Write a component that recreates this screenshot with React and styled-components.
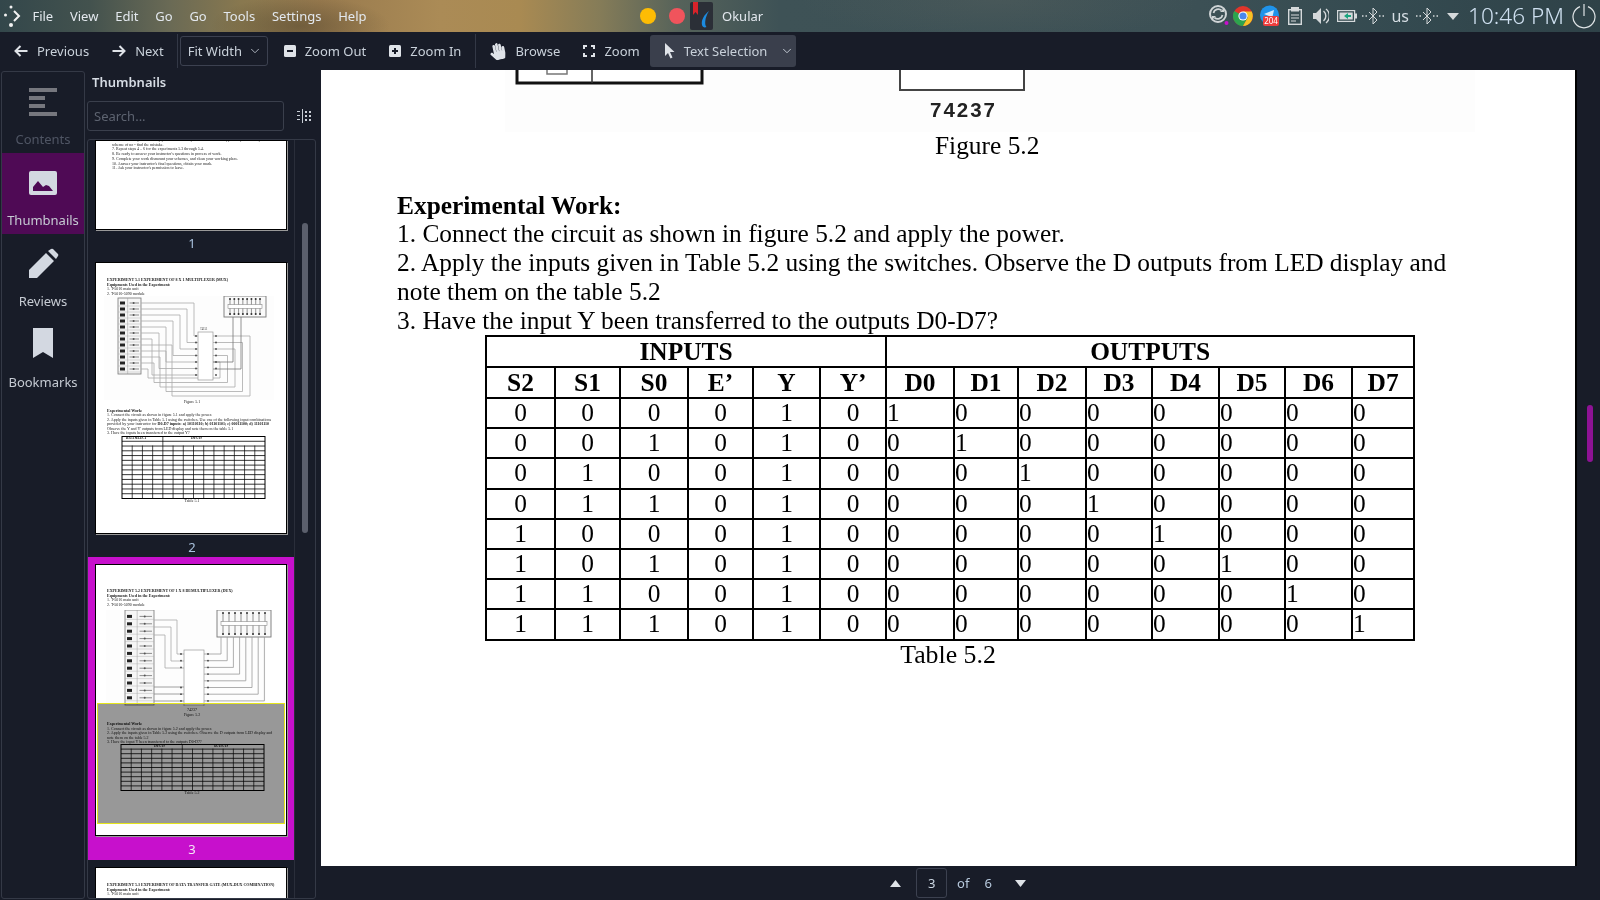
import React from 'react';
import styled, { createGlobalStyle } from 'styled-components';
import { ChevronDown } from 'lucide-react';
import { FaHandPaper } from 'react-icons/fa';

const GlobalStyle = createGlobalStyle`
  html, body {
    margin: 0;
    padding: 0;
    background: #181c28;
  }
  * { box-sizing: border-box; }
`;

const Screen = styled.div`
  width: 1600px;
  height: 900px;
  display: flex;
  flex-direction: column;
  overflow: hidden;
  background: #181c28;
  font-family: "Noto Sans", sans-serif;
  font-size: 13px;
  color: #d3dae3;
`;

/* top desktop panel */
const Panel = styled.div`
  height: 32px;
  flex: none;
  display: flex;
  align-items: center;
  padding-left: 3px;
  background:
    radial-gradient(ellipse 90px 30px at 300px 26px, rgba(70, 60, 40, 0.45), transparent),
    radial-gradient(ellipse 200px 40px at 1000px 0, rgba(110, 110, 100, 0.22), transparent),
    linear-gradient(90deg, #33474b 0, #43524e 90px, #6a6a55 170px, #88784f 240px, #987a4e 320px, #ab8b56 440px, #a98a52 520px, #857c58 600px, #55625a 680px, #3e5256 780px, #3c5055 1200px, #344a50 1400px, #2f4248 1600px);
`;

const Logo = styled.svg`
  width: 18px;
  height: 26px;
  margin-right: 2px;
`;

const MenuBar = styled.div`
  display: flex;
  margin-left: 1px;
  width: 616px;
`;

const MenuItem = styled.span`
  padding: 0 8.4px;
  color: #e3e8ee;
`;

const TaskDot = styled.span`
  width: 16px;
  height: 16px;
  border-radius: 50%;
  background: ${p => p.$color};
  margin-right: ${p => p.$space}px;
`;

const TaskIcon = styled.svg`
  width: 23px;
  height: 28px;
`;

const TaskTitle = styled.span`
  margin-left: 9px;
  color: #e3e8ee;
`;

const Tray = styled.div`
  margin-left: auto;
  display: flex;
  align-items: center;
  padding-right: 4px;
`;

const TrayIcon = styled.svg`
  margin-left: ${p => p.$gap || 0}px;
  flex: none;
  display: block;
`;

const TrayText = styled.span`
  margin-left: ${p => p.$gap || 0}px;
  color: #d5dde3;
  font-size: 16px;
`;

const Clock = styled.span`
  margin-left: 9px;
  font-size: 22.6px;
  font-weight: 300;
  line-height: 32px;
  color: #cfe0f0;
  white-space: nowrap;
`;

/* okular toolbar */
const Toolbar = styled.div`
  height: 38px;
  flex: none;
  display: flex;
  align-items: center;
  gap: 1px;
  padding-left: 3px;
  background: #181c28;
`;

const ToolButton = styled.div`
  height: 32px;
  display: flex;
  align-items: center;
  gap: 9px;
  padding: 0 11px;
  color: #c9d1da;
  white-space: nowrap;
  border-radius: 3px;
  svg { flex: none; }
`;

const ActiveButton = styled(ToolButton)`
  margin-left: -2px;
  padding-left: 13px;
  background: #3a3f4c;
`;

const Separator = styled.div`
  width: 1px;
  height: 34px;
  margin: 0 ${p => p.$space}px;
  background: #333846;
`;

const Combo = styled.div`
  width: 88px;
  height: 30px;
  margin-right: 4px;
  padding: 0 5px 0 7px;
  display: flex;
  align-items: center;
  justify-content: space-between;
  border: 1px solid #3c4150;
  border-radius: 3px;
  color: #c9d1da;
`;

const Body = styled.div`
  flex: 1;
  display: flex;
  min-height: 0;
`;

/* left tabs */
const Tabs = styled.div`
  width: 84px;
  margin: 1px 0 1px 1px;
  flex: none;
  border: 1px solid #343946;
  border-radius: 3px;
`;

const Tab = styled.div`
  height: ${p => p.$h || 80}px;
  display: flex;
  flex-direction: column;
  align-items: center;
  padding-top: ${p => p.$top || 14}px;
  background: ${p => (p.$active ? '#4f0a55' : 'transparent')};
  color: ${p => (p.$disabled ? '#4f5564' : '#c6cbd3')};
`;

const TabIcon = styled.svg`
  width: 32px;
  height: 32px;
  display: block;
`;

const TabLabel = styled.span`
  font-size: 13px;
  line-height: 20px;
  margin-top: ${p => p.$gap || 11}px;
`;

/* thumbnails panel */
const SidePanel = styled.div`
  width: 231px;
  flex: none;
  display: flex;
  flex-direction: column;
  padding: 0 0 1px 2px;
`;

const SideTitle = styled.div`
  height: 31px;
  padding: 1px 0 0 5px;
  line-height: 22px;
  font-weight: 600;
  color: #d6dce4;
`;

const SearchRow = styled.div`
  display: flex;
  align-items: center;
  gap: 13px;
`;

const SearchBox = styled.div`
  width: 197px;
  height: 30px;
  padding-left: 6px;
  line-height: 28px;
  border: 1px solid #3a3f4c;
  border-radius: 3px;
  color: #5d6370;
`;

const ListFrame = styled.div`
  flex: 1;
  min-height: 0;
  margin-top: 8px;
  display: flex;
  overflow: hidden;
  border: 1px solid #343946;
  border-radius: 3px;
`;

const ThumbList = styled.div`
  width: 207px;
  flex: none;
  border-right: 1px solid #2a2e3a;
`;

const ListScroll = styled.div`
  flex: 1;
  padding: 83px 7px 0 7px;
`;

const ScrollThumb = styled.div`
  height: 310px;
  border-radius: 3px;
  background: #5b5f6c;
`;

const ThumbRow = styled.div`
  height: ${p => p.$h}px;
  padding-top: ${p => p.$top}px;
  background: ${p => (p.$selected ? '#c710cc' : 'transparent')};
  color: ${p => (p.$selected ? '#f4e6f6' : '#a9c2de')};
  text-align: center;
`;

const ThumbPage = styled.div`
  position: relative;
  width: 192px;
  height: ${p => p.$h || 272}px;
  margin-left: 7px;
  padding-top: ${p => p.$pad || 0}px;
  overflow: hidden;
  background: #fff;
  border: 1px solid #000;
  box-shadow: 1px 1px 0 #999;
  color: #222;
  text-align: left;
  font-family: "Liberation Serif", serif;
`;

const ThumbLine = styled.div`
  font-size: 4px;
  line-height: ${p => p.$lh || 4.5}px;
  margin-left: ${p => p.$left || 11}px;
  margin-top: ${p => p.$top || 0}px;
  font-weight: ${p => (p.$bold ? 700 : 400)};
  white-space: nowrap;
  text-align: ${p => (p.$center ? 'center' : 'left')};
  filter: blur(0.25px);
`;

const ThumbDrawing = styled.svg`
  display: block;
  margin-top: ${p => p.$top || 0}px;
  filter: blur(0.25px);
`;

const ThumbNumber = styled.div`
  line-height: 26px;
  padding-left: 2px;
  font-size: 13px;
`;

const Highlight = styled.div`
  position: absolute;
  left: 0;
  right: 0;
  top: 138px;
  height: 121px;
  margin: 0 1px;
  background: #989898;
  mix-blend-mode: multiply;
`;

const HighlightEdge = styled.div`
  position: absolute;
  left: 0;
  right: 0;
  top: 138px;
  height: 121px;
  margin: 0 1px;
  border: 1px solid #e5e51c;
`;

/* right side: document and page bar */
const Main = styled.div`
  flex: 1;
  min-width: 0;
  display: flex;
  flex-direction: column;
`;

const Viewer = styled.div`
  flex: 1;
  min-height: 0;
  display: flex;
  padding-left: 5px;
  overflow: hidden;
`;

const Page = styled.div`
  width: 1256px;
  flex: none;
  background: #fff;
  border-right: 2px solid #000;
  color: #000;
  font-family: "Liberation Serif", serif;
  font-size: 25.4px;
  line-height: 29px;
`;

const Figure = styled.svg`
  display: block;
`;

const FigureCaption = styled.div`
  padding-left: 614px;
  line-height: 26px;
  font-size: 25.4px;
`;

const Work = styled.div`
  margin-top: 33px;
  padding-left: 76px;
`;

const WorkTitle = styled.div`
  font-weight: 700;
  line-height: 28px;
`;

const ResultTable = styled.table`
  width: 928px;
  margin-left: 164px;
  table-layout: fixed;
  border-collapse: collapse;
  font-size: 25.4px;
  line-height: 26px;

  th, td {
    padding: 0 0 2px;
    border: 2px solid #000;
    text-align: center;
    overflow: hidden;
  }
`;

const HeadRow = styled.tr`
  height: 31px;
`;

const DataRow = styled.tr`
  height: 30.2px;
`;

const OutCell = styled.td`
  && {
    text-align: left;
    padding-left: 0;
  }
`;

const TableCaption = styled.div`
  width: 929px;
  margin-left: 164px;
  padding-right: 3px;
  text-align: center;
  line-height: 28px;
  font-size: 25.8px;
`;

const ViewerScroll = styled.div`
  flex: 1;
  padding: 335px 7px 0 10px;
`;

const ViewerThumb = styled.div`
  height: 57px;
  border-radius: 3px;
  background: #8e1295;
`;

const PageBar = styled.div`
  height: 34px;
  flex: none;
  display: flex;
  align-items: center;
  justify-content: center;
  color: #b7c9dd;
`;

const Spin = styled.div`
  width: 31px;
  height: 30px;
  margin: 0 10px 0 15px;
  text-align: center;
  line-height: 28px;
  border: 1px solid #3c4150;
  border-radius: 3px;
  color: #cbd6e2;
`;

const PageCount = styled.span`
  margin-left: 15px;
  margin-right: 23px;
`;

const Triangle = styled.svg`
  width: 11px;
  height: 7px;
  display: block;
`;

const menus = ['File', 'View', 'Edit', 'Go', 'Go', 'Tools', 'Settings', 'Help'];

const inputHead = ['S2', 'S1', 'S0', 'E’', 'Y', 'Y’'];
const outputHead = ['D0', 'D1', 'D2', 'D3', 'D4', 'D5', 'D6', 'D7'];
const colWidths = [69, 65, 68, 65, 67, 66, 68, 64, 68, 66, 67, 66, 67, 62];
const selects = [
  [0, 0, 0], [0, 0, 1], [0, 1, 0], [0, 1, 1],
  [1, 0, 0], [1, 0, 1], [1, 1, 0], [1, 1, 1],
];

// tiny switch box used in the page thumbnails
const SwitchBox = ({ x, y, w, rows, pitch, h }) => (
  <g>
    <rect x={x} y={y} width={w} height={h} fill="#f6f6f6" stroke="#777" strokeWidth="0.8" />
    <line x1={x + w * 0.42} y1={y} x2={x + w * 0.42} y2={y + h} stroke="#999" strokeWidth="0.5" />
    {Array.from({ length: rows }).map((_, i) => {
      const ry = y + pitch * (i + 1) - 1;
      return (
        <g key={i}>
          <line x1={x} y1={ry + 3} x2={x + w} y2={ry + 3} stroke="#aaa" strokeWidth="0.4" />
          <rect x={x + 2} y={ry - 1.5} width="5" height="3" fill="#222" />
          <line x1={x + w * 0.5} y1={ry} x2={x + w - 2} y2={ry} stroke="#444" strokeWidth="0.6" />
          <circle cx={x + w * 0.68} cy={ry} r="1" fill="#555" />
        </g>
      );
    })}
  </g>
);

const LedBox = ({ x, y, w, h, n }) => (
  <g>
    <rect x={x} y={y} width={w} height={h} fill="#fafafa" stroke="#777" strokeWidth="0.9" />
    <rect x={x + 4} y={y + h / 2 - 2} width={w - 8} height="4" fill="#fff" stroke="#777" strokeWidth="0.5" />
    {Array.from({ length: n }).map((_, i) => {
      const px = x + 6 + i * ((w - 12) / (n - 1));
      return (
        <g key={i}>
          <line x1={px} y1={y + 3} x2={px} y2={y + h / 2 - 2} stroke="#666" strokeWidth="0.7" />
          <line x1={px} y1={y + h / 2 + 2} x2={px} y2={y + h - 2} stroke="#666" strokeWidth="0.7" />
          <circle cx={px} cy={y + 3} r="1" fill="#333" />
          <circle cx={px} cy={y + h - 3} r="1" fill="#333" />
        </g>
      );
    })}
  </g>
);

const wire = { fill: 'none', stroke: '#a9a9a9', strokeWidth: 0.8 };

const Drawing51 = () => (
  <ThumbDrawing width="190" height="104" viewBox="0 0 190 104">
    <rect x="8" y="0" width="170" height="104" fill="#fdfdfd" />
    <SwitchBox x={22} y={2} w={23} h={76} rows={12} pitch={6} />
    <LedBox x={128} y={0} w={42} h={21} n={8} />
    {Array.from({ length: 7 }).map((_, i) => (
      <path key={i} {...wire} d={`M45 ${7 + i * 6}H${98 - i * 7}V${40 + i * 6.5}H102`} />
    ))}
    {Array.from({ length: 5 }).map((_, i) => (
      <path key={i} {...wire} d={`M45 ${49 + i * 6}H${52 + (4 - i) * 6}V${100 - i * 4.5}H${154 - i * 7.5}V${40 + i * 6.5}H117`} />
    ))}
    <path {...wire} d="M117 66H137V21M117 73H145V21" stroke="#777" />
    <rect x="102" y="36" width="15" height="48" fill="#fff" stroke="#999" strokeWidth="0.7" />
    {Array.from({ length: 7 }).map((_, i) => (
      <g key={i}>
        <circle cx="100" cy={40 + i * 6.5} r="0.9" fill="#444" />
        <circle cx="120" cy={40 + i * 6.5} r="0.9" fill="#444" />
      </g>
    ))}
    <text x="104" y="34" fontSize="3" fill="#333">74151</text>
  </ThumbDrawing>
);

const Drawing52 = () => (
  <ThumbDrawing width="190" height="96" viewBox="0 0 190 96" $top="3">
    <rect x="10" y="0" width="160" height="96" fill="#fdfdfd" />
    <SwitchBox x={29} y={0} w={29} h={95} rows={12} pitch={7.4} />
    <LedBox x={121} y={0} w={54} h={27} n={8} />
    <path {...wire} d="M58 10H81V44H88M58 17H75V51H88M58 25H69V58H88" />
    <path {...wire} d="M58 77H88M58 84H88M58 91H88" stroke="#888" />
    {Array.from({ length: 8 }).map((_, i) => (
      <path key={i} {...wire} stroke="#999" d={`M108 ${44 + i * 6.7}H${125 + i * 6.2}V27`} />
    ))}
    <rect x="88" y="40" width="20" height="56" fill="#fff" stroke="#999" strokeWidth="0.7" />
    {Array.from({ length: 8 }).map((_, i) => (
      <g key={i}>
        <circle cx="85" cy={44 + i * 6.7} r={i > 2 && i < 5 ? 0 : 0.9} fill="#444" />
        <circle cx="112" cy={44 + i * 6.7} r="0.9" fill="#444" />
      </g>
    ))}
  </ThumbDrawing>
);

// thumbnail versions of the tables
const MiniTable = ({ x, w, h, rows, head, cols, title, titleX, splitAt, top }) => {
  const rowH = h / rows;
  return (
    <ThumbDrawing width="190" height={h + 1} viewBox={`0 0 190 ${h + 1}`} $top={top}>
      <rect x={x} y="0.5" width={w} height={h} fill="none" stroke="#000" strokeWidth="1" />
      {Array.from({ length: rows - 1 }).map((_, i) => (
        <line key={i} x1={x} x2={x + w} y1={0.5 + rowH * (i + 1)} y2={0.5 + rowH * (i + 1)} stroke="#000" strokeWidth="0.8" />
      ))}
      {Array.from({ length: cols - 1 }).map((_, i) => {
        const cx = x + (w / cols) * (i + 1);
        const start = i + 1 === splitAt ? 0 : rowH * head;
        return <line key={i} x1={cx} x2={cx} y1={start} y2={h} stroke="#000" strokeWidth="0.7" />;
      })}
      <text x={titleX[0]} y={rowH - 1.5} fontSize="3" fontFamily="Liberation Serif" fontWeight="700">{title[0]}</text>
      <text x={titleX[1]} y={rowH - 1.5} fontSize="3" fontFamily="Liberation Serif" fontWeight="700">{title[1]}</text>
    </ThumbDrawing>
  );
};

const SyncIcon = () => (
  <TrayIcon width="24" height="22" viewBox="0 0 24 22">
    <circle cx="9" cy="9" r="8" fill="none" stroke="#cfd4d6" strokeWidth="2" />
    <path d="M4.5 8a4.8 4.8 0 0 1 8-2.6M13.5 10a4.8 4.8 0 0 1-8 2.6" fill="none" stroke="#cfd4d6" strokeWidth="1.8" />
    <path d="M11 7h4V3zM7 11H3v4z" fill="#cfd4d6" />
    <circle cx="17.5" cy="18" r="2" fill="#c710cc" />
  </TrayIcon>
);

const ChromeIcon = () => (
  <TrayIcon width="20" height="20" viewBox="0 0 20 20">
    <circle cx="10" cy="10" r="10" fill="#e0352b" />
    <path d="M10 10 1.3 5A10 10 0 0 0 10 20l5-8.7z" fill="#2da44e" />
    <path d="M10 5.5h8.7A10 10 0 0 1 10 20l5-8.7z" fill="#f7c325" />
    <circle cx="10" cy="10" r="4.6" fill="#fff" />
    <circle cx="10" cy="10" r="3.6" fill="#4a87ec" />
  </TrayIcon>
);

const MailBadge = () => (
  <TrayIcon width="20" height="22" viewBox="0 0 20 22" $gap="7">
    <circle cx="9.5" cy="10" r="9.5" fill="#1f93ea" />
    <path d="M4 9 14 5l-2 9-3-3z" fill="#fff" opacity="0.8" />
    <rect x="3" y="11" width="16" height="10" rx="2" fill="#ee3d3d" />
    <text x="11" y="19" fontSize="8" fill="#fff" textAnchor="middle" fontFamily="Noto Sans">204</text>
  </TrayIcon>
);

const ClipboardIcon = () => (
  <TrayIcon width="14" height="18" viewBox="0 0 14 18" $gap="8">
    <rect x="0.7" y="2.7" width="12.6" height="14.6" fill="none" stroke="#d5d9db" strokeWidth="1.4" />
    <rect x="3" y="0" width="8" height="4.5" fill="#d5d9db" />
    <path d="M3 8h8M3 11h8M3 14h5" stroke="#d5d9db" strokeWidth="1.2" />
  </TrayIcon>
);

const SpeakerIcon = () => (
  <TrayIcon width="16" height="16" viewBox="0 0 16 16" $gap="11">
    <path d="M0 5h3l5-5v16l-5-5H0z" fill="#d5d9db" />
    <path d="M10.5 3a6.500 6.500 0 0 1 0 10M13 1a9 9 0 0 1 0 14" fill="none" stroke="#d5d9db" strokeWidth="1.4" />
  </TrayIcon>
);

const BatteryIcon = () => (
  <TrayIcon width="20" height="12" viewBox="0 0 20 12" $gap="8">
    <rect x="0.6" y="0.6" width="17" height="10.8" fill="none" stroke="#d5d9db" strokeWidth="1.2" />
    <rect x="18" y="3.5" width="2" height="5" fill="#d5d9db" />
    <rect x="2.5" y="2.500" width="13.2" height="7" fill="#d5d9db" />
    <path d="M7 6l4-3v2h3v2h-3v2z" fill="#1aa57e" />
  </TrayIcon>
);

const BluetoothIcon = ({ gap }) => (
  <TrayIcon width="22" height="16" viewBox="0 0 22 16" $gap={gap}>
    <path d="M7 4l8 8-4 4V0l4 4-8 8" fill="none" stroke="#d5d9db" strokeWidth="1" />
    <path d="M0 8h1.500M3.500 8H5M17 8h1.500M20.500 8H22" stroke="#d5d9db" strokeWidth="1.6" />
  </TrayIcon>
);

const PowerIcon = () => (
  <TrayIcon width="24" height="25" viewBox="0 0 24 25" $gap="8">
    <path d="M8 2.600a11 11 0 1 0 8 0" fill="none" stroke="#dfe4e6" strokeWidth="1.2" />
    <path d="M12 0v12" stroke="#dfe4e6" strokeWidth="1.2" />
  </TrayIcon>
);

const NavArrow = ({ flip }) => (
  <svg width="14" height="12" viewBox="0 0 14 12" fill="none" stroke="#dfe3e8" strokeWidth="2" style={flip ? { transform: 'scaleX(-1)' } : undefined}>
    <path d="M6.500 1 1.500 6l5 5M2 6h11.500" />
  </svg>
);

const ZoomSquare = ({ plus }) => (
  <svg width="12" height="12" viewBox="0 0 12 12">
    <rect width="12" height="12" rx="1.500" fill="#dfe3e8" />
    <rect x="3" y="5" width="6" height="2" fill="#181c28" />
    {plus && <rect x="5" y="3" width="2" height="6" fill="#181c28" />}
  </svg>
);

const CornersIcon = () => (
  <svg width="12" height="12" viewBox="0 0 12 12" fill="none" stroke="#dfe3e8" strokeWidth="2">
    <path d="M1 4V1h3M8 1h3v3M11 8v3H8M4 11H1V8" />
  </svg>
);

const CursorIcon = () => (
  <svg width="12" height="16" viewBox="0 0 12 16">
    <path d="M2 0v13l3-3 2.500 5.500 2-1L7 9h4.500z" fill="#dfe3e8" />
  </svg>
);

export default function App() {
  return (
    <Screen>
      <GlobalStyle />
      <Panel>
        <Logo viewBox="0 0 18 26">
          <circle cx="8" cy="4" r="1.500" fill="#f2f2f2" />
          <circle cx="2.500" cy="12" r="1.500" fill="#f2f2f2" />
          <circle cx="8" cy="22" r="2" fill="#f2f2f2" />
          <path d="M11 8l5 5-5 5" fill="none" stroke="#f2f2f2" strokeWidth="2" />
        </Logo>
        <MenuBar>
          {menus.map((m, i) => <MenuItem key={i}>{m}</MenuItem>)}
        </MenuBar>
        <TaskDot $color="#fdbc04" $space="13" />
        <TaskDot $color="#f0545c" $space="5" />
        <TaskIcon viewBox="0 0 23 28">
          <rect width="23" height="28" rx="2" fill="#2b2f37" />
          <path d="M3 0h5v13L5.500 10 3 13z" fill="#d8232a" />
          <path d="M19 9c-5 4-8 9-7 14 .4 2 2.500 3 4.500 2-2-2-2-9 2.500-16z" fill="#1c8be0" />
        </TaskIcon>
        <TaskTitle>Okular</TaskTitle>
        <Tray>
          <SyncIcon />
          <ChromeIcon />
          <MailBadge />
          <ClipboardIcon />
          <SpeakerIcon />
          <BatteryIcon />
          <BluetoothIcon gap="5" />
          <TrayText $gap="7">us</TrayText>
          <BluetoothIcon gap="7" />
          <TrayIcon width="12" height="7" viewBox="0 0 12 7" $gap="9">
            <path d="M0 0h12L6 7z" fill="#d5d9db" />
          </TrayIcon>
          <Clock>10:46 PM</Clock>
          <PowerIcon />
        </Tray>
      </Panel>

      <Toolbar>
        <ToolButton><NavArrow />Previous</ToolButton>
        <ToolButton><NavArrow flip />Next</ToolButton>
        <Separator $space="1" />
        <Combo>Fit Width<ChevronDown size={14} strokeWidth={1.4} /></Combo>
        <ToolButton><ZoomSquare />Zoom Out</ToolButton>
        <ToolButton><ZoomSquare plus />Zoom In</ToolButton>
        <Separator $space="1.5" />
        <ToolButton><FaHandPaper size={17} color="#dfe3e8" style={{ transform: 'rotate(-12deg)' }} />Browse</ToolButton>
        <ToolButton><CornersIcon />Zoom</ToolButton>
        <ActiveButton>
          <CursorIcon />Text Selection
          <ChevronDown size={14} strokeWidth={1.6} style={{ marginLeft: 4, marginRight: -9 }} />
        </ActiveButton>
      </Toolbar>

      <Body>
        <Tabs>
          <Tab $disabled $h="81" $top="14">
            <TabIcon viewBox="0 0 32 32">
              <path d="M2 2h28v4H2zM2 10h16v4H2zM2 18h16v4H2zM2 26h28v4H2z" fill="#76777e" />
            </TabIcon>
            <TabLabel>Contents</TabLabel>
          </Tab>
          <Tab $active $h="81" $top="14">
            <TabIcon viewBox="0 0 32 32">
              <rect x="2" y="4" width="28" height="24" rx="2" fill="#d3d8e1" />
              <path d="M6 24v-4l5-6 5 6 3-2 3 1 4 5z" fill="#4f0a55" />
            </TabIcon>
            <TabLabel>Thumbnails</TabLabel>
          </Tab>
          <Tab $h="80" $top="14">
            <TabIcon viewBox="0 0 32 32">
              <path d="M2 30v-8L19 5l8 8-17 17zM21 3l3-2q1-.6 2 0l5 5q.6 1 0 2l-2 3z" fill="#d3d8e1" />
            </TabIcon>
            <TabLabel>Reviews</TabLabel>
          </Tab>
          <Tab $h="80" $top="13">
            <TabIcon viewBox="0 0 32 32">
              <path d="M6 1h20v30l-10-6-10 6z" fill="#d3d8e1" />
            </TabIcon>
            <TabLabel $gap="13">Bookmarks</TabLabel>
          </Tab>
        </Tabs>

        <SidePanel>
          <SideTitle>Thumbnails</SideTitle>
          <SearchRow>
            <SearchBox>Search...</SearchBox>
            <svg width="14" height="14" viewBox="0 0 14 14" fill="#c9ced6">
              <path d="M5 0h1v14H5zM0 2h3v1H0zM0 6h3v1H0zM0 10h3v1H0zM8 2h2v2H8zM12 2h2v2h-2zM8 6h2v2H8zM12 6h2v2h-2zM8 10h2v2H8zM12 10h2v2h-2z" />
            </svg>
          </SearchRow>
          <ListFrame>
            <ThumbList>
              <ThumbRow $h="115" $top="0">
                <ThumbPage $h="90">
                  <ThumbLine $left="16" $lh="4.7" $top="-3">6. Disassemble your circuit by your instructor. If your circuit has errors, you may dismount your</ThumbLine>
                  <ThumbLine $left="16" $lh="4.7">scheme of no - find the mistake.</ThumbLine>
                  <ThumbLine $left="16" $lh="4.7">7.   Repeat steps 4 .. 6 for the experiments 5.3 through 5.4.</ThumbLine>
                  <ThumbLine $left="16" $lh="4.7">8.   Be ready to answer your instructor's questions in process of work.</ThumbLine>
                  <ThumbLine $left="16" $lh="4.7">9.   Complete your work dismount your schemes, and clean your working place.</ThumbLine>
                  <ThumbLine $left="16" $lh="4.7">10. Answer your instructor's final questions, obtain your mark.</ThumbLine>
                  <ThumbLine $left="16" $lh="4.7">11. Ask your instructor's permission to leave.</ThumbLine>
                </ThumbPage>
                <ThumbNumber>1</ThumbNumber>
              </ThumbRow>
              <ThumbRow $h="302" $top="7">
                <ThumbPage $pad="15">
                  <ThumbLine $bold>EXPERIMENT 5.1 EXPERIMENT OF 8 X 1 MULTIPLEXER (MUX)</ThumbLine>
                  <ThumbLine $bold>Equipments Used in the Experiment:</ThumbLine>
                  <ThumbLine>1. T-5016 main unit</ThumbLine>
                  <ThumbLine>2. T-5016-5090 module</ThumbLine>
                  <Drawing51 />
                  <ThumbLine $center $left="2">Figure 5.1</ThumbLine>
                  <ThumbLine $bold $top="4">Experimental Work:</ThumbLine>
                  <ThumbLine>1. Connect the circuit as shown in figure 5.1 and apply the power.</ThumbLine>
                  <ThumbLine>2. Apply the inputs given in Table 5.1 using the switches. Use one of the following input combinations</ThumbLine>
                  <ThumbLine>provided by your instructor for <b>D0-D7 inputs: a) 10110110; b) 01101101; c) 00011100; d) 11101110</b></ThumbLine>
                  <ThumbLine>Observe the Y and Y' outputs from LED display and note them on the table 5.1</ThumbLine>
                  <ThumbLine>3. Have the inputs been transferred to the output Y?</ThumbLine>
                  <MiniTable x={26} w={143} h={62} rows={13} head={2} cols={14} splitAt={4} title={['DATA SELECT', 'INPUTS']} titleX={[30, 95]} />
                  <ThumbLine $center $left="2">Table 5.1</ThumbLine>
                </ThumbPage>
                <ThumbNumber>2</ThumbNumber>
              </ThumbRow>
              <ThumbRow $h="303" $top="7" $selected>
                <ThumbPage $pad="24">
                  <ThumbLine $bold>EXPERIMENT 5.2 EXPERIMENT OF 1 X 8 DEMULTIPLEXER (DUX)</ThumbLine>
                  <ThumbLine $bold>Equipments Used in the Experiment:</ThumbLine>
                  <ThumbLine>1. T-5016 main unit</ThumbLine>
                  <ThumbLine>2. T-5016-5090 module</ThumbLine>
                  <Drawing52 />
                  <ThumbLine $center $left="2" $top="2">74237</ThumbLine>
                  <ThumbLine $center $left="2">Figure 5.2</ThumbLine>
                  <ThumbLine $bold $top="5">Experimental Work:</ThumbLine>
                  <ThumbLine>1. Connect the circuit as shown in figure 5.2 and apply the power.</ThumbLine>
                  <ThumbLine>2. Apply the inputs given in Table 5.2 using the switches. Observe the D outputs from LED display and</ThumbLine>
                  <ThumbLine>note them on the table 5.2</ThumbLine>
                  <ThumbLine>3. Have the input Y been transferred to the outputs D0-D7?</ThumbLine>
                  <MiniTable x={25} w={143} h={46} rows={10} head={1} cols={14} splitAt={6} title={['INPUTS', 'OUTPUTS']} titleX={[58, 118]} top="-1" />
                  <ThumbLine $center $left="2">Table 5.2</ThumbLine>
                  <Highlight />
                  <HighlightEdge />
                </ThumbPage>
                <ThumbNumber>3</ThumbNumber>
              </ThumbRow>
              <ThumbRow $h="40" $top="7">
                <ThumbPage $pad="15" $h="40">
                  <ThumbLine $bold>EXPERIMENT 5.3 EXPERIMENT OF DATA TRANSFER GATE (MUX-DUX COMBINATION)</ThumbLine>
                  <ThumbLine $bold>Equipments Used in the Experiment:</ThumbLine>
                  <ThumbLine>1. T-5016 main unit</ThumbLine>
                </ThumbPage>
              </ThumbRow>
            </ThumbList>
            <ListScroll>
              <ScrollThumb />
            </ListScroll>
          </ListFrame>
        </SidePanel>

        <Main>
          <Viewer>
            <Page>
              <Figure width="1254" height="62" viewBox="0 0 1254 62">
                <rect x="184" width="970" height="62" fill="#fdfdfd" />
                <rect x="196" y="-4" width="185" height="17" fill="#fff" stroke="#111" strokeWidth="3" />
                <line x1="271" y1="0" x2="271" y2="13" stroke="#333" strokeWidth="1.500" />
                <path d="M226 0v4h20V0" fill="none" stroke="#777" strokeWidth="1.500" />
                <rect x="579" y="-4" width="124" height="24" fill="#fff" stroke="#444" strokeWidth="2" />
                <text x="609" y="47" fontFamily="Liberation Sans" fontWeight="700" fontSize="20.500" letterSpacing="2" fill="#222">74237</text>
              </Figure>
              <FigureCaption>Figure 5.2</FigureCaption>
              <Work>
                <WorkTitle>Experimental Work:</WorkTitle>
                <div>1. Connect the circuit as shown in figure 5.2 and apply the power.</div>
                <div>2. Apply the inputs given in Table 5.2 using the switches. Observe the D outputs from LED display and</div>
                <div>note them on the table 5.2</div>
                <div>3. Have the input Y been transferred to the outputs D0-D7?</div>
              </Work>
              <ResultTable>
                <colgroup>
                  {colWidths.map((w, i) => <col key={i} width={w} />)}
                </colgroup>
                <thead>
                  <HeadRow>
                    <th colSpan="6">INPUTS</th>
                    <th colSpan="8">OUTPUTS</th>
                  </HeadRow>
                  <HeadRow>
                    {[...inputHead, ...outputHead].map(h => <th key={h}>{h}</th>)}
                  </HeadRow>
                </thead>
                <tbody>
                  {selects.map((s, r) => (
                    <DataRow key={r}>
                      {s.map((v, i) => <td key={i}>{v}</td>)}
                      <td>0</td>
                      <td>1</td>
                      <td>0</td>
                      {outputHead.map((d, i) => <OutCell key={d}>{i === r ? 1 : 0}</OutCell>)}
                    </DataRow>
                  ))}
                </tbody>
              </ResultTable>
              <TableCaption>Table 5.2</TableCaption>
            </Page>
            <ViewerScroll>
              <ViewerThumb />
            </ViewerScroll>
          </Viewer>
          <PageBar>
            <Triangle viewBox="0 0 11 7"><path d="M5.500 0 11 7H0z" fill="#dfe3e8" /></Triangle>
            <Spin>3</Spin>
            <span>of</span>
            <PageCount>6</PageCount>
            <Triangle viewBox="0 0 11 7"><path d="M0 0h11L5.500 7z" fill="#dfe3e8" /></Triangle>
          </PageBar>
        </Main>
      </Body>
    </Screen>
  );
}
